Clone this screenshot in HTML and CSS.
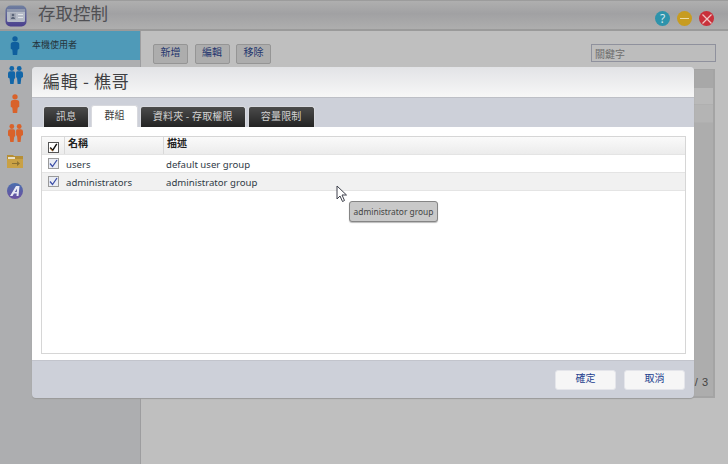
FILE: index.html
```html
<!DOCTYPE html>
<html lang="zh-Hant">
<head>
<meta charset="utf-8">
<title>存取控制</title>
<link rel="stylesheet" href="styles.css">
</head>
<body>
<div class="app">
  <header class="topbar">
    <svg class="app-icon" width="22" height="22" viewBox="0 0 22 22"><defs><linearGradient id="ai" x1="0" y1="0" x2="0" y2="1"><stop offset="0" stop-color="#6f7f9f"/><stop offset="1" stop-color="#4a3f8e"/></linearGradient></defs><rect x="0.500" y="0.500" width="21" height="21" rx="5" fill="url(#ai)"/><rect x="2" y="4" width="18" height="13" rx="1.500" fill="#b4bac6"/><rect x="2" y="4" width="18" height="3" fill="#8f98ad"/><rect x="5" y="8" width="6" height="7" fill="#a3a8b5"/><circle cx="8" cy="10" r="1.300" fill="#5a6478"/><path d="M6 14c0-2.600 4-2.600 4 0z" fill="#5a6478"/><rect x="13" y="9" width="5" height="1" fill="#dfe2e8"/><rect x="13" y="12" width="5" height="1" fill="#dfe2e8"/></svg>
    <h1 class="app-title">存取控制</h1>
    <div class="win-btns">
      <span class="win-btn help">?</span>
      <span class="win-btn min"><i class="dash"></i></span>
      <span class="win-btn close"><svg width="14" height="14" viewBox="0 0 14 14"><path d="M2.500 2.500l9 9M11.500 2.500l-9 9" stroke="#f0c4c4" stroke-width="1.300" fill="none"/></svg></span>
    </div>
  </header>
  <div class="main">
    <aside class="sidebar">
      <div class="side-item active">
        <svg class="ic-one" viewBox="0 0 10 20"><circle cx="5" cy="3" r="2.800" fill="#0f5f9e"/><path d="M0.500 9q0-2.800 2.500-2.800h4Q9.500 6.200 9.500 9v4.500l-1.700 1-.5 5.500H2.700l-.5-5.500-1.700-1z" fill="#0f5f9e"/></svg>
        <span>本機使用者</span>
      </div>
      <div class="side-icon">
        <svg class="ic-two" viewBox="0 0 15 18"><circle cx="3.800" cy="2.500" r="2.400" fill="#1266a8"/><circle cx="11.200" cy="2.500" r="2.400" fill="#1266a8"/><path d="M0 7.500q0-2.200 2.200-2.200h3.200q1.800 0 1.800 2.200v4.500l-1 1-.6 5H2.200L1.600 12.500 0 11.500z" fill="#1266a8"/><path d="M15 7.500q0-2.200-2.200-2.200H9.600q-1.200 0-1.500 1.200v4.500l1 1.500.5 5.500h3l.7-6 1.700-1z" fill="#1266a8"/></svg>
      </div>
      <div class="side-icon">
        <svg class="ic-one" viewBox="0 0 10 20"><circle cx="5" cy="3" r="2.800" fill="#d9622a"/><path d="M0.500 9q0-2.800 2.500-2.800h4Q9.500 6.200 9.500 9v4.500l-1.700 1-.5 5.500H2.700l-.5-5.500-1.700-1z" fill="#d9622a"/></svg>
      </div>
      <div class="side-icon">
        <svg class="ic-two" viewBox="0 0 15 18"><circle cx="3.800" cy="2.500" r="2.400" fill="#d9622a"/><circle cx="11.200" cy="2.500" r="2.400" fill="#d9622a"/><path d="M0 7.500q0-2.200 2.200-2.200h3.200q1.800 0 1.800 2.200v4.500l-1 1-.6 5H2.200L1.600 12.500 0 11.500z" fill="#d9622a"/><path d="M15 7.500q0-2.200-2.200-2.200H9.600q-1.200 0-1.500 1.200v4.500l1 1.500.5 5.500h3l.7-6 1.700-1z" fill="#d9622a"/></svg>
      </div>
      <div class="side-icon">
        <svg width="16" height="13" viewBox="0 0 16 13"><path d="M0 0h6l1 1h9v12H0z" fill="#b68f35"/><rect x="1" y="2" width="7" height="2" fill="#e8e0c8"/><rect x="0" y="4" width="16" height="9" fill="#c9a145"/><path d="M5 8h5V6l3 2.500L10 11V9H5z" fill="#8d7233"/></svg>
      </div>
      <div class="side-icon">
        <svg width="16" height="16" viewBox="0 0 16 16"><defs><linearGradient id="ag" x1="0" y1="0" x2="0" y2="1"><stop offset="0" stop-color="#4a6fae"/><stop offset="1" stop-color="#6a4fa0"/></linearGradient></defs><circle cx="8" cy="8" r="8" fill="url(#ag)"/><path d="M3 13L9 3h3.500l-1 10H9.500l.2-2.500H7L5.500 13zM7.800 9h2l.3-3.500z" fill="#e8e9f4"/></svg>
      </div>
    </aside>
    <section class="content">
      <div class="toolbar">
        <button class="tool-btn">新增</button>
        <button class="tool-btn">編輯</button>
        <button class="tool-btn">移除</button>
        <input class="search" placeholder="關鍵字">
      </div>
      <div class="behind-table">
        <div class="bt-head"></div>
        <div class="bt-row"></div>
        <div class="bt-row alt"></div>
        <div class="bt-pager">/ 3</div>
      </div>
    </section>
  </div>

  <div class="modal">
    <div class="modal-head">編輯 - 樵哥</div>
    <div class="tabs">
      <span class="tab">訊息</span>
      <span class="tab current">群組</span>
      <span class="tab">資料夾 - 存取權限</span>
      <span class="tab">容量限制</span>
    </div>
    <div class="modal-body">
      <div class="grid">
        <div class="grid-row grid-header">
          <div class="c-check"><span class="check master"><svg width="11" height="11" viewBox="0 0 11 11"><path d="M1.500 5.500l3 3.500 5-8" stroke="#111" stroke-width="1.800" fill="none"/><path d="M1.500 7l3 3" stroke="#e8851c" stroke-width="1" fill="none"/></svg></span></div>
          <div class="c-name">名稱</div>
          <div class="c-desc">描述</div>
        </div>
        <div class="grid-row">
          <div class="c-check"><span class="check"><svg width="9" height="9" viewBox="0 0 9 9"><path d="M1 4.500l2.500 3L8 1" stroke="#3d4fa8" stroke-width="1.300" fill="none"/></svg></span></div>
          <div class="c-name">users</div>
          <div class="c-desc">default user group</div>
        </div>
        <div class="grid-row odd">
          <div class="c-check"><span class="check"><svg width="9" height="9" viewBox="0 0 9 9"><path d="M1 4.500l2.500 3L8 1" stroke="#3d4fa8" stroke-width="1.300" fill="none"/></svg></span></div>
          <div class="c-name">administrators</div>
          <div class="c-desc">administrator group</div>
        </div>
      </div>
    </div>
    <div class="modal-foot">
      <button class="foot-btn">確定</button>
      <button class="foot-btn">取消</button>
    </div>
  </div>

  <svg class="cursor" width="12" height="18" viewBox="0 0 12 18"><path d="M1 1v13l3-3 2.500 5.500 2-1L6 10h4.500z" fill="#fff" stroke="#3c3f4a" stroke-width="1"/></svg>
  <div class="tooltip">administrator group</div>
</div>
</body>
</html>
```

FILE: styles.css
```css
* { box-sizing: border-box; }
html, body { margin: 0; padding: 0; }
body {
  width: 728px;
  height: 464px;
  overflow: hidden;
  font-family: "Noto Sans", "Noto Sans CJK TC", sans-serif;
  background: #bfbfbf;
}
.app {
  position: relative;
  width: 728px;
  height: 464px;
  display: flex;
  flex-direction: column;
}
.topbar {
  height: 31px;
  flex: none;
  display: flex;
  align-items: center;
  padding: 0 14px 0 5px;
  background: linear-gradient(#afafaf, #a1a1a3 45%, #aeaeae);
  border-top: 1px solid #9c9c9c;
  border-bottom: 2px solid #9a9a9a;
}
.app-icon { flex: none; margin-top: 1px; }
.app-title {
  margin: -5px 0 0 11px;
  font-size: 17.500px;
  font-weight: 400;
  line-height: 24px;
  color: #505054;
  font-family: "Noto Sans CJK TC", sans-serif;
}
.win-btns { margin-left: auto; display: flex; gap: 7px; margin-top: 7px; }
.win-btn {
  width: 15px;
  height: 15px;
  border-radius: 50%;
  display: flex;
  align-items: center;
  justify-content: center;
  font-size: 12px;
  color: #d5e8ee;
}
.win-btn.help { background: #2e93ab; }
.win-btn.min { background: #c79c20; }
.win-btn.close { background: #c9303a; }
.dash { display: block; width: 9px; height: 1px; background: #ecdca8; }
.main { flex: 1; display: flex; min-height: 0; }
.sidebar {
  width: 141px;
  flex: none;
  background: #adaeb0;
  border-right: 1px solid #9d9d9f;
  display: flex;
  flex-direction: column;
}
.side-item {
  height: 29px;
  display: flex;
  align-items: center;
  gap: 12px;
  padding: 0 0 0 10px;
  background: #4f9ab8;
  font: 9px "Noto Sans CJK TC", sans-serif;
  color: #25333b;
}
.side-item span { margin-top: -3px; }
.side-icon {
  height: 29px;
  margin-left: 7px;
  width: 16px;
  display: flex;
  align-items: center;
  justify-content: center;
}
.ic-one { width: 10px; height: 19px; flex: none; }
.ic-two { width: 15px; height: 18px; flex: none; }
.content { flex: 1; position: relative; padding: 13px 12px 0 12px; }
.toolbar { display: flex; align-items: flex-start; gap: 6.500px; height: 25px; }
.tool-btn {
  width: 35px;
  height: 20px;
  padding: 0 0 5px;
  font: 10px/14px "Noto Sans CJK TC", sans-serif;
  color: #23356e;
  background: #adadad;
  border: 1px solid #959595;
  border-radius: 2px;
}
.search {
  margin-left: auto;
  width: 125px;
  height: 18px;
  padding: 0 3px;
  background: #bdbdbd;
  border: 1px solid #8f919d;
  font: 10px "Noto Sans CJK TC", sans-serif;
  color: #666;
}
.search::placeholder { color: #6e6e6e; opacity: 1; }
.behind-table {
  margin-right: 1px;
  height: 329px;
  background: #adadad;
  border: 1px solid #a4a4a4;
  border-right-width: 2px;
  border-bottom-width: 2px;
  position: relative;
}
.bt-head { height: 18px; background: #a8a8a8; }
.bt-row { height: 17px; background: #b9b9b9; border-bottom: 1px solid #b0b0b0; }
.bt-row.alt { height: 18px; background: #b4b4b4; }
.bt-pager {
  position: absolute;
  right: 5px;
  bottom: 8px;
  font: 11px "Liberation Sans", sans-serif;
  color: #444;
  word-spacing: 1px;
}
.modal {
  position: absolute;
  left: 32px;
  top: 67px;
  width: 662px;
  height: 331px;
  border-radius: 4px;
  background: #cdd0d9;
  overflow: hidden;
  box-shadow: 0 1px 1px #9a9a9a;
  display: flex;
  flex-direction: column;
}
.modal-head {
  height: 31px;
  flex: none;
  padding-left: 11px;
  background: linear-gradient(#e2e3e6, #f7f7f7);
  border-bottom: 1px solid #bdbfc6;
  font: 17px/28px "Noto Sans CJK TC", sans-serif;
  color: #3f3f42;
  letter-spacing: 0.700px;
}
.tabs {
  height: 29px;
  flex: none;
  display: flex;
  align-items: flex-end;
  gap: 2px;
  padding-left: 11px;
}
.tab {
  height: 21px;
  padding: 0 12px;
  border-radius: 3px 3px 0 0;
  background: linear-gradient(#4b4b4b, #232323);
  border: 1px solid #d8d9de;
  border-bottom: 0;
  color: #d2d2d2;
  font: 10px/18px "Noto Sans CJK TC", sans-serif;
  letter-spacing: 0.200px;
}
.tab.current {
  background: #fff;
  color: #3c3c3c;
  height: 22px;
}
.modal-body {
  height: 233px;
  flex: none;
  background: #fff;
  padding: 9px 8px 6px 9px;
}
.grid {
  height: 100%;
  border: 1px solid #d6d6d6;
  display: flex;
  flex-direction: column;
  font-size: 9.600px;
  color: #2f3a46;
}
.grid-row {
  height: 18px;
  flex: none;
  display: flex;
  align-items: center;
  border-bottom: 1px solid #e4e4e4;
}
.grid-row.odd { background: #f1f1f1; }
.grid-header {
  height: 18px;
  background: linear-gradient(#fafafa, #ececec);
  font: 700 10px "Noto Sans CJK TC", sans-serif;
  color: #222;
}
.c-check { width: 22px; flex: none; display: flex; justify-content: center; }
.c-name { width: 99px; flex: none; padding: 1px 0 0 2px; }
.c-desc { flex: 1; padding: 1px 0 0 3px; }
.grid-header .c-name, .grid-header .c-desc { border-left: 1px solid #d9d9d9; height: 100%; line-height: 12px; padding: 0 0 0 3px; }
.check {
  width: 11px;
  height: 11px;
  border: 1px solid #9a9a9a;
  background: #e9ecf4;
  display: flex;
  align-items: center;
  justify-content: center;
}
.check.master { background: #fff; border-color: #555; margin-top: 4px; }
.modal-foot {
  flex: 1;
  display: flex;
  justify-content: flex-end;
  align-items: flex-start;
  gap: 8px;
  padding: 9px 9px 0 0;
  border-top: 1px solid #c2c4cc;
}
.foot-btn {
  width: 61px;
  height: 20px;
  padding: 0 0 4px;
  background: #f6f6f6;
  border: 1px solid #e4e5ea;
  border-radius: 3px;
  color: #23408e;
  font: 10px/14px "Noto Sans CJK TC", sans-serif;
}
.cursor { position: absolute; left: 336px; top: 185px; }
.tooltip {
  position: absolute;
  left: 349px;
  top: 201px;
  width: 89px;
  height: 21px;
  background: #c9c9c9;
  border: 1px solid #858585;
  border-radius: 3px;
  box-shadow: 0 1px 1px #bbb;
  font-size: 8.400px;
  line-height: 19px;
  text-align: center;
  color: #444;
}
```
